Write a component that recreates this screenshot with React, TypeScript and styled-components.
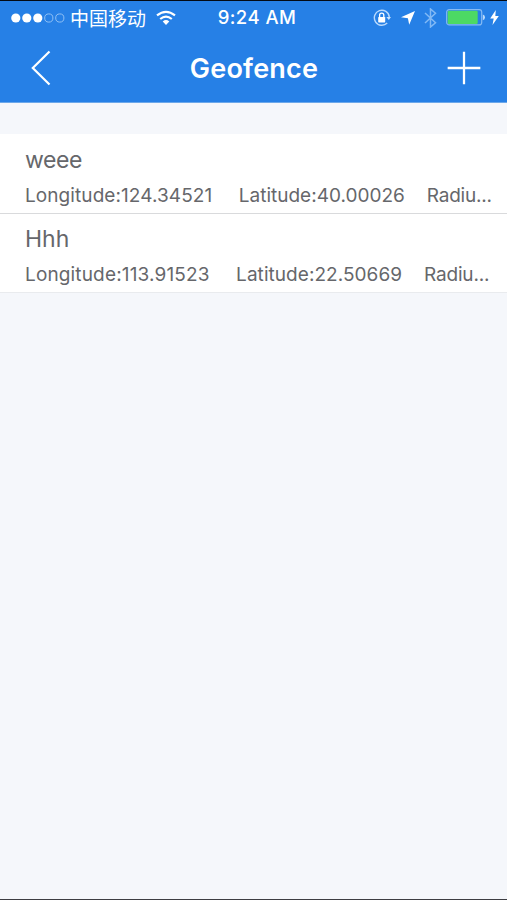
import React from "react";
import styled, { createGlobalStyle } from "styled-components";

const GlobalStyle = createGlobalStyle`
  * { box-sizing: border-box; }
  html, body { margin: 0; padding: 0; background: #f5f7fb; }
  body { font-family: Inter, "Noto Sans CJK SC", sans-serif; overflow: hidden; }
`;

const Screen = styled.main`
  display: flex;
  flex-direction: column;
  width: 507px;
  height: 900px;
  background: #f5f7fb;
  border-bottom: 1px solid #3d3d42;
`;

const Header = styled.header`
  height: 103px;
  background: #2680e6;
  border-top: 1px solid #030a14;
  border-bottom: 1px solid #6ca8ea;
  color: #fff;
`;

const StatusBar = styled.div`
  display: grid;
  grid-template-columns: 1fr auto 1fr;
  align-items: center;
  height: 33px;
  padding: 0 7px 0 11px;
`;

const StatusGroup = styled.div<{ $end?: boolean }>`
  display: flex;
  align-items: center;
  justify-content: ${(p) => (p.$end ? "flex-end" : "flex-start")};
  height: 33px;
  svg { display: block; flex: none; }
`;

const Carrier = styled.span`
  margin: 0 10px 0 5px;
  font: 400 19px/32px "Noto Sans CJK SC", sans-serif;
  white-space: nowrap;
`;

const Clock = styled.time`
  padding-left: 3px;
  font-size: 18.5px;
  font-weight: 500;
  line-height: 33px;
  letter-spacing: 0.45px;
  white-space: nowrap;
`;

const NavBar = styled.nav`
  display: grid;
  grid-template-columns: 60px 1fr 60px;
  align-items: center;
  height: 67px;
`;

const NavButton = styled.button`
  display: flex;
  padding: 0;
  border: 0;
  background: none;
  color: #fff;
  justify-content: center;
`;

const BackButton = styled(NavButton)`
  padding-left: 22px;
`;

const AddButton = styled(NavButton)`
  padding-right: 26px;
`;

const Title = styled.h1`
  margin: 0;
  padding: 2px 0 0 1px;
  font-size: 27px;
  font-weight: 600;
  line-height: 36px;
  letter-spacing: 0.2px;
  text-align: center;
`;

const FenceList = styled.ul`
  margin: 31px 0 0;
  padding: 0;
  list-style: none;
`;

const FenceRow = styled.li<{ $last?: boolean }>`
  display: flex;
  flex-direction: column;
  height: ${(p) => (p.$last ? 79 : 80)}px;
  padding: ${(p) => (p.$last ? 10 : 11)}px 0 0 25px;
  background: #fff;
  border-bottom: 1px solid ${(p) => (p.$last ? "#e9ebee" : "#d9dadc")};
  color: #66676b;
`;

const FenceName = styled.div<{ $spacing: number }>`
  font-size: 23px;
  line-height: 30px;
  letter-spacing: ${(p) => p.$spacing}px;
`;

const Details = styled.div`
  display: flex;
  margin-top: 9px;
  font-size: 19px;
  line-height: 24px;
  white-space: nowrap;
`;

const Longitude = styled.span<{ $spacing: number }>`
  margin-right: 26.5px;
  letter-spacing: ${(p) => p.$spacing}px;
`;

const Latitude = styled(Longitude)`
  margin-right: 22px;
`;

const Radius = styled.span`
  letter-spacing: -0.2px;
`;

const fences = [
  { name: "weee", longitude: "124.34521", latitude: "40.00026", nameSpacing: -0.4, lonSpacing: 0.08, latSpacing: 0 },
  { name: "Hhh", longitude: "113.91523", latitude: "22.50669", nameSpacing: 0, lonSpacing: 0.15, latSpacing: 0.05 },
];

const Signal = () => (
  <svg width="54" height="12" viewBox="0 0 54 12">
    {[4.8, 15.8, 26.8].map((x) => <circle key={x} cx={x} cy="6" r="4.6" fill="#fff" />)}
    {[37.8, 48.8].map((x) => (
      <circle key={x} cx={x} cy="6" r="4.1" fill="none" stroke="#8fc0f5" strokeWidth="1" />
    ))}
  </svg>
);

const Wifi = () => (
  <svg width="20" height="16" viewBox="0 0 20 16" fill="none" stroke="#fff" strokeWidth="2.2">
    <path d="M1 5.4Q10-1.8 19 5.4M4.2 9Q10 4.2 15.8 9" />
    <path d="M6.7 11.4Q10 8.6 13.3 11.4L10 14.9Z" fill="#fff" stroke="none" />
  </svg>
);

const RotationLock = () => (
  <svg width="18" height="18" viewBox="0 0 18 18">
    <path d="M14.2 14A7.5 7.5 0 1 1 16.3 8" fill="none" stroke="#b9d9fc" strokeWidth="1.4" />
    <path d="M13.4 8H18L15.8 11Z" fill="#c9e2fd" />
    <rect x="5.2" y="8" width="7" height="5.4" rx=".6" fill="#fff" />
    <path d="M6.6 8V6.2a2.1 2.1 0 0 1 4.2 0V8" fill="none" stroke="#fff" strokeWidth="1.3" />
  </svg>
);

const LocationArrow = () => (
  <svg width="14" height="14" viewBox="0 0 14 14">
    <path d="M14 0L8.2 13.8L6.9 7.2L0 6.2Z" fill="#fff" />
  </svg>
);

const Bluetooth = () => (
  <svg width="13" height="20" viewBox="0 0 13 20" fill="none" stroke="#82b9f5" strokeWidth="1.5">
    <path d="M1 5L11.5 14.8L6.5 19V1L11.5 5.2L1 15" />
  </svg>
);

const Battery = () => (
  <svg width="39" height="17" viewBox="0 0 39 17">
    <rect x=".7" y=".7" width="35" height="15.2" rx="2.5" fill="none" stroke="#86baf3" strokeWidth="1.2" />
    <rect x="1.7" y="1.7" width="30" height="13.3" rx="1.2" fill="#4cd964" />
    <path d="M36.8 5.5Q39 6 39 8.3T36.8 11.2Z" fill="#b8d9fb" />
  </svg>
);

const Charging = () => (
  <svg width="9" height="15" viewBox="0 0 9 15">
    <path d="M5.8 0L.2 8.5H3.7L2.5 15L8.8 6H5.3Z" fill="#fff" />
  </svg>
);

const StatusIcons = styled.div`
  display: flex;
  align-items: center;
  padding-right: 1px;
  & > :nth-child(2) { margin-left: 10px; }
  & > :nth-child(3) { margin-left: 9px; }
  & > :nth-child(4) { margin-left: 9px; }
  & > :nth-child(5) { margin-left: 5px; }
`;

export default function App() {
  return (
    <>
      <GlobalStyle />
      <Screen>
        <Header>
          <StatusBar>
            <StatusGroup><Signal /><Carrier>中国移动</Carrier><Wifi /></StatusGroup>
            <Clock>9:24 AM</Clock>
            <StatusGroup $end>
              <StatusIcons>
                <RotationLock /><LocationArrow /><Bluetooth /><Battery /><Charging />
              </StatusIcons>
            </StatusGroup>
          </StatusBar>
          <NavBar>
            <BackButton aria-label="Back">
              <svg width="20" height="36" viewBox="0 0 20 36" fill="none" stroke="#fff" strokeWidth="2.2">
                <path d="M18.5 1.5L1.8 18L18.5 34.5" />
              </svg>
            </BackButton>
            <Title>Geofence</Title>
            <AddButton aria-label="Add">
              <svg width="36" height="36" viewBox="0 0 36 36" fill="none" stroke="#fff" strokeWidth="2.4">
                <path d="M18 .7V35.3M.7 18H35.3" />
              </svg>
            </AddButton>
          </NavBar>
        </Header>
        <FenceList>
          {fences.map((fence, i) => (
            <FenceRow key={fence.name} $last={i === fences.length - 1}>
              <FenceName $spacing={fence.nameSpacing}>{fence.name}</FenceName>
              <Details>
                <Longitude $spacing={fence.lonSpacing}>Longitude:{fence.longitude}</Longitude>
                <Latitude $spacing={fence.latSpacing}>Latitude:{fence.latitude}</Latitude>
                <Radius>Radiu...</Radius>
              </Details>
            </FenceRow>
          ))}
        </FenceList>
      </Screen>
    </>
  );
}
